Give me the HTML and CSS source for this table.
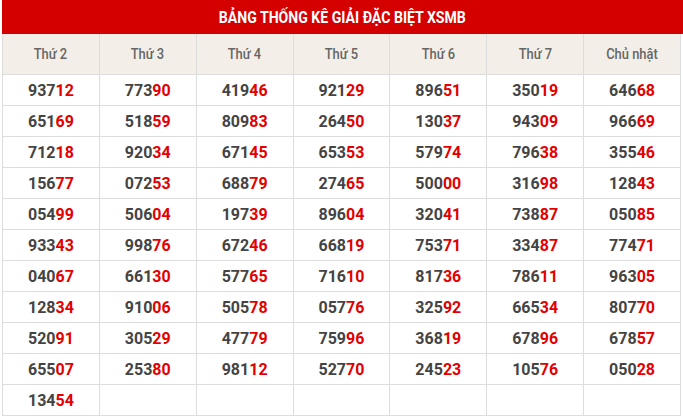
FILE: index.html
```html
<!DOCTYPE html>
<html lang="vi">
<head>
<meta charset="utf-8">
<title>Bảng thống kê giải đặc biệt XSMB</title>
<link rel="stylesheet" href="styles.css">
</head>
<body>
<div class="wrap">
  <div class="caption"><span class="cond title">BẢNG THỐNG KÊ GIẢI ĐẶC BIỆT XSMB</span></div>
  <table class="stats">
    <thead>
      <tr>
        <th><span class="cond">Thứ 2</span></th>
        <th><span class="cond">Thứ 3</span></th>
        <th><span class="cond">Thứ 4</span></th>
        <th><span class="cond">Thứ 5</span></th>
        <th><span class="cond">Thứ 6</span></th>
        <th><span class="cond">Thứ 7</span></th>
        <th><span class="cond">Chủ nhật</span></th>
      </tr>
    </thead>
    <tbody>
      <tr><td>937<b>12</b></td><td>773<b>90</b></td><td>419<b>46</b></td><td>921<b>29</b></td><td>896<b>51</b></td><td>350<b>19</b></td><td>646<b>68</b></td></tr>
      <tr><td>651<b>69</b></td><td>518<b>59</b></td><td>809<b>83</b></td><td>264<b>50</b></td><td>130<b>37</b></td><td>943<b>09</b></td><td>966<b>69</b></td></tr>
      <tr><td>712<b>18</b></td><td>920<b>34</b></td><td>671<b>45</b></td><td>653<b>53</b></td><td>579<b>74</b></td><td>796<b>38</b></td><td>355<b>46</b></td></tr>
      <tr><td>156<b>77</b></td><td>072<b>53</b></td><td>688<b>79</b></td><td>274<b>65</b></td><td>500<b>00</b></td><td>316<b>98</b></td><td>128<b>43</b></td></tr>
      <tr><td>054<b>99</b></td><td>506<b>04</b></td><td>197<b>39</b></td><td>896<b>04</b></td><td>320<b>41</b></td><td>738<b>87</b></td><td>050<b>85</b></td></tr>
      <tr><td>933<b>43</b></td><td>998<b>76</b></td><td>672<b>46</b></td><td>668<b>19</b></td><td>753<b>71</b></td><td>334<b>87</b></td><td>774<b>71</b></td></tr>
      <tr><td>040<b>67</b></td><td>661<b>30</b></td><td>577<b>65</b></td><td>716<b>10</b></td><td>817<b>36</b></td><td>786<b>11</b></td><td>963<b>05</b></td></tr>
      <tr><td>128<b>34</b></td><td>910<b>06</b></td><td>505<b>78</b></td><td>057<b>76</b></td><td>325<b>92</b></td><td>665<b>34</b></td><td>807<b>70</b></td></tr>
      <tr><td>520<b>91</b></td><td>305<b>29</b></td><td>477<b>79</b></td><td>759<b>96</b></td><td>368<b>19</b></td><td>678<b>96</b></td><td>678<b>57</b></td></tr>
      <tr><td>655<b>07</b></td><td>253<b>80</b></td><td>981<b>12</b></td><td>527<b>70</b></td><td>245<b>23</b></td><td>105<b>76</b></td><td>050<b>28</b></td></tr>
      <tr><td>134<b>54</b></td><td></td><td></td><td></td><td></td><td></td><td></td></tr>
    </tbody>
  </table>
</div>
</body>
</html>
```
FILE: styles.css
```css
html, body {
  margin: 0;
  padding: 0;
  background: #fff;
}
body {
  font-family: Roboto, "Noto Sans", "DejaVu Sans", sans-serif;
}
.wrap {
  margin-left: 2px;
  width: 681px;
}
.caption {
  height: 34px;
  background: #d40000;
  color: #fff;
  font-weight: 700;
  font-size: 16px;
  display: flex;
  align-items: center;
  justify-content: center;
}
.cond {
  display: inline-block;
  transform: scaleX(0.86);
  white-space: nowrap;
}
.cond.title {
  transform: scaleX(0.88);
}
.stats {
  width: 679px;
  border-collapse: collapse;
  table-layout: fixed;
}
.stats th {
  height: 40px;
  background: #f3efe8;
  color: #666;
  font-weight: 500;
  font-size: 15px;
  border: 1px solid #ddd;
  border-top: none;
  padding: 0;
  text-align: center;
  vertical-align: middle;
}
.stats td {
  height: 30px;
  border: 1px solid #ddd;
  padding: 0;
  text-align: center;
  vertical-align: middle;
  font-weight: 700;
  font-size: 16px;
  color: #444;
}
.stats td b {
  color: #e30000;
  font-weight: 700;
}
```
